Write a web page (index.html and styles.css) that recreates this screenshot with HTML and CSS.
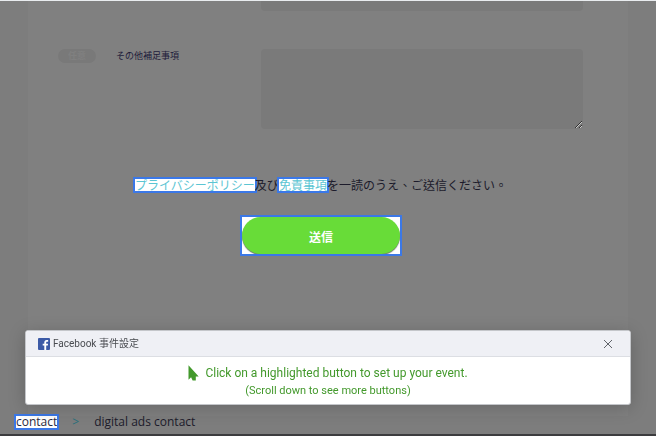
FILE: index.html
```html
<!DOCTYPE html>
<html lang="ja">
<head>
<meta charset="utf-8">
<meta name="viewport" content="width=device-width, initial-scale=1">
<title>digital ads contact</title>
<link rel="stylesheet" href="styles.css">
</head>
<body>
<main class="card">
  <form class="form">
    <div class="row row-clipped">
      <input class="field" type="text" aria-label="お問い合わせ">
    </div>
    <div class="row">
      <span class="badge">任意</span>
      <label class="label" for="notes">その他補足事項</label>
      <textarea class="field field-tall" id="notes"></textarea>
    </div>
    <p class="agree" lang="zh-Hant"><a class="link highlight" href="#privacy">プライバシーポリシー</a>及び<a class="link highlight" href="#terms">免責事項</a>を一読のうえ、ご送信ください。</p>
    <div class="submit-box highlight"><button class="submit" type="submit">送信</button></div>
  </form>
</main>
<nav class="crumbs" aria-label="breadcrumb">
  <a class="crumb-link highlight" href="#contact">contact</a>
  <span class="crumb-sep">&gt;</span>
  <span>digital ads contact</span>
</nav>
<section class="panel">
  <header class="panel-head">
    <svg class="logo" viewBox="0 0 12 12" aria-hidden="true"><rect width="12" height="12" rx="1" fill="#3c5aa6"/><path d="M8.2 12V7.5h1.6l.25-1.8H8.2V4.6c0-.55.2-.9.95-.9h1V2.1a12 12 0 0 0-1.45-.1C7.2 2 6.3 2.9 6.3 4.4v1.3H4.7v1.8h1.6V12z" fill="#fff"/></svg>
    <h1 class="panel-title" lang="zh-Hant">Facebook 事件設定</h1>
    <button class="close" type="button" aria-label="Close"><svg class="close-icon" viewBox="0 0 10 10" aria-hidden="true"><path d="M1 1l8 8M9 1L1 9" fill="none" stroke="#606369" stroke-width="1"/></svg></button>
  </header>
  <div class="panel-body">
    <p class="tip"><svg class="cursor" viewBox="0 0 11 16" aria-hidden="true"><path d="M.5.3v14.4l2.6-2.4 1.5 3.2h3.200V11.400H10.700z" fill="#43992c"/></svg>Click on a highlighted button to set up your event.</p>
    <p class="hint">(Scroll down to see more buttons)</p>
  </div>
</section>
</body>
</html>
```
FILE: styles.css
```css
* {
  box-sizing: border-box;
}

body {
  display: flex;
  flex-direction: column;
  min-height: 100vh;
  margin: 0;
  border-top: 1px solid #e9ecef;
  border-bottom: 2px solid #3c3c3e;
  background: #7d7d7d;
  color: #1c1b2b;
  font-family: "Open Sans", "Noto Sans CJK TC", sans-serif;
  font-size: 12px;
}

p,
h1 {
  margin: 0;
}

button {
  padding: 0;
  border: 0;
  font: inherit;
  cursor: pointer;
}

.card {
  flex: 1;
  margin: 0 28px;
  background: #808080;
}

.form {
  display: flex;
  flex-direction: column;
}

.row {
  display: grid;
  grid-template-columns: 58px 145px 1fr;
  align-items: start;
  padding: 0 45px 0 30px;
}

.row-clipped {
  margin-bottom: 38px;
}

.field {
  grid-column: 3;
  display: block;
  width: 100%;
  height: 10px;
  margin: 0;
  padding: 0 8px;
  border: 0;
  border-radius: 0 0 4px 4px;
  background: #7a7a7a;
  font: inherit;
}

.field-tall {
  height: 80px;
  padding: 8px;
  border-radius: 4px;
  resize: vertical;
}

.badge {
  width: 38px;
  border-radius: 7px;
  background: #797979;
  color: #808080;
  font-family: "Noto Sans CJK JP", sans-serif;
  font-size: 9px;
  font-weight: 700;
  line-height: 14px;
  text-align: center;
}

.label {
  color: #1d1a3a;
  font-family: "Noto Sans CJK JP", sans-serif;
  font-size: 9px;
  font-weight: 400;
  line-height: 14px;
}

.agree {
  margin-top: 48px;
  padding-right: 14px;
  font-family: "Noto Sans CJK TC", sans-serif;
  line-height: 16px;
  text-align: center;
}

.highlight {
  background: #fff;
  outline: 2px solid #3b78e7;
}

.link {
  display: inline-block;
  height: 12px;
  margin: 2px 0;
  color: #5bc5d3;
  line-height: 12px;
  text-decoration: none;
  vertical-align: top;
}

.submit-box {
  align-self: center;
  width: 158px;
  margin-top: 24px;
  margin-right: 14px;
}

.submit {
  display: block;
  width: 100%;
  height: 37px;
  padding-top: 2px;
  border-radius: 19px;
  background: #68dc38;
  box-shadow: 0 1px 1px #6b7468;
  color: #fff;
  font-family: "Noto Sans CJK JP", sans-serif;
  font-weight: 700;
}

.crumbs {
  display: flex;
  align-items: center;
  gap: 15px;
  padding: 0 16px 6px;
  line-height: 12px;
}

.crumb-link {
  color: #2b2a40;
  text-decoration: none;
}

.crumb-sep {
  color: #28707c;
}

.panel {
  position: fixed;
  right: 25px;
  bottom: 31px;
  left: 25px;
  overflow: hidden;
  border: 1px solid #c4c6ca;
  border-radius: 3px;
  background: #fff;
  box-shadow: 0 3px 18px rgba(0, 0, 0, 0.2);
  font-family: Roboto, "Noto Sans CJK TC", sans-serif;
}

.panel-head {
  display: flex;
  align-items: center;
  gap: 3px;
  height: 26px;
  padding: 0 17px 0 12px;
  border-bottom: 1px solid #dcdee3;
  background: #eff0f5;
}

.logo {
  width: 12px;
  height: 12px;
}

.panel-title {
  color: #494b50;
  font-size: 10px;
  font-weight: 400;
  line-height: 16px;
}

.close {
  display: flex;
  margin-left: auto;
  background: none;
}

.close-icon {
  width: 10px;
  height: 10px;
}

.panel-body {
  padding: 7px 0 5px;
  color: #43992c;
  text-align: center;
}

.tip {
  display: flex;
  align-items: center;
  justify-content: center;
  gap: 6px;
  line-height: 18px;
}

.cursor {
  width: 11px;
  height: 16px;
}

.hint {
  font-size: 11px;
  line-height: 17px;
}
```
